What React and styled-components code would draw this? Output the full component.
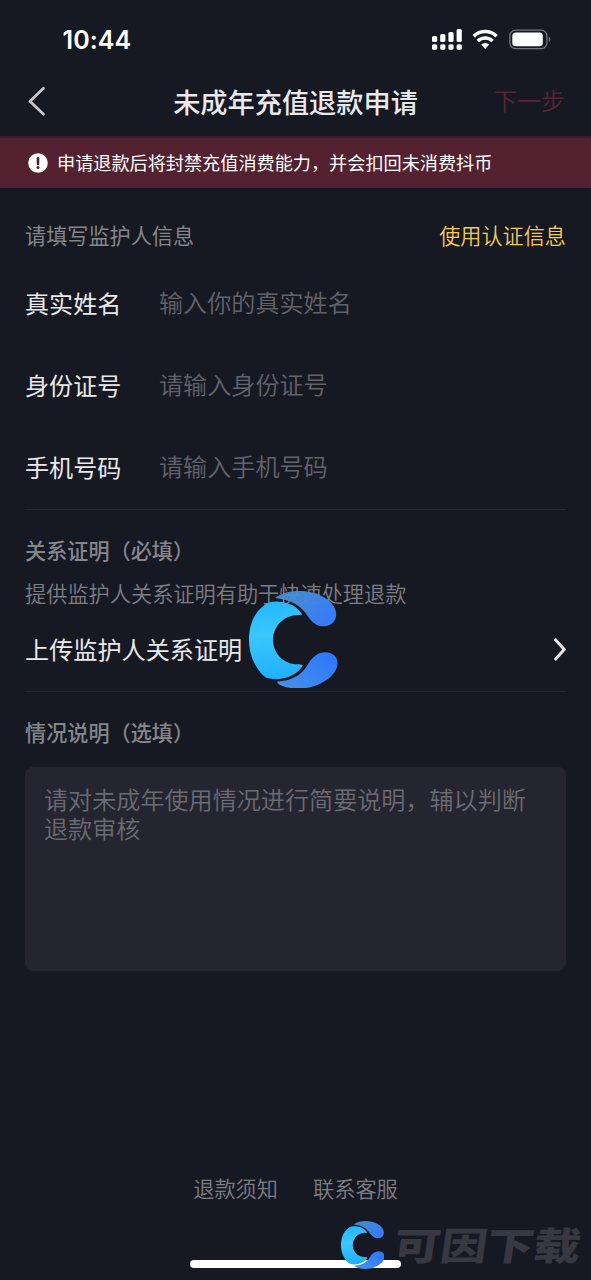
import React from "react";
import styled, { createGlobalStyle } from "styled-components";

const Global = createGlobalStyle`
  * { box-sizing: border-box; }
  body { margin: 0; background: #171922; }
`;

const Screen = styled.main`
  position: relative;
  display: flex;
  flex-direction: column;
  width: 591px;
  height: 1280px;
  overflow: hidden;
  background: #171922;
  color: #e9e9ec;
  font-family: "Noto Sans CJK SC", sans-serif;
  font-weight: 400;
  white-space: nowrap;
`;

const StatusBar = styled.div`
  display: flex;
  align-items: center;
  justify-content: space-between;
  height: 68px;
  padding: 12px 40px 0 62.5px;
`;

const Clock = styled.time`
  font: 600 25px/30px Inter, sans-serif;
  letter-spacing: 0.1px;
  color: #fff;
`;

const StatusIcons = styled.svg`
  display: block;
  width: 120px;
  height: 24px;
`;

const Header = styled.header`
  display: grid;
  grid-template-columns: 100px 1fr 100px;
  align-items: center;
  height: 68px;
  padding: 0 26px 2px;
`;

const Title = styled.h1`
  margin: 0;
  text-align: center;
  font-size: 27.2px;
  line-height: 40px;
  font-weight: 500;
  color: #e9e9f0;
`;

const BackButton = styled.button`
  display: flex;
  padding: 0;
  border: 0;
  background: none;
`;

const NextButton = styled.button`
  padding: 0 0 2px;
  border: 0;
  background: none;
  text-align: right;
  font: 350 24px/36px "Noto Sans CJK SC", sans-serif;
  color: #5a2338;
`;

const Notice = styled.div`
  display: flex;
  align-items: center;
  gap: 9px;
  height: 52px;
  padding-left: 28px;
  border-top: 2px solid #37202c;
  background: #532130;
  font-size: 18.15px;
  font-weight: 400;
  line-height: 26px;
  color: #fff;
`;

const NoticeText = styled.span`
  padding-bottom: 3px;
`;

const Content = styled.div`
  display: flex;
  flex-direction: column;
  flex: 1;
  padding: 0 25px;
`;

const SectionHead = styled.div`
  display: flex;
  align-items: center;
  justify-content: space-between;
  height: 32px;
  margin-top: ${(p) => p.$top}px;
  font-size: 21.15px;
  line-height: 32px;
  font-weight: ${(p) => p.$weight || 400};
  color: #85868c;
`;

const AuthLink = styled.a`
  font-weight: 350;
  color: #f3cd58;
`;

const Field = styled.label`
  display: flex;
  align-items: center;
  height: 82px;
  font-size: 24.1px;
  line-height: 36px;
`;

const FieldLabel = styled.span`
  width: 134px;
`;

const Placeholder = styled.span`
  padding-bottom: 2px;
  font-weight: 350;
  color: #62636a;
`;

const Fields = styled.div`
  height: 247px;
  margin-top: 11px;
`;

const Divider = styled.hr`
  width: 100%;
  height: 1px;
  margin: 0;
  border: 0;
  background: #25252e;
`;

const Hint = styled.p`
  margin: 11px 0 0;
  font-size: 21.2px;
  line-height: 32px;
  font-weight: 350;
  color: #7d7e84;
`;

const UploadRow = styled.div`
  display: flex;
  align-items: center;
  justify-content: space-between;
  height: 82px;
  padding-bottom: 2px;
  font-size: 24.15px;
  line-height: 36px;
`;

const Description = styled.div`
  height: 204px;
  margin-top: 19px;
  padding: 17px 19px;
  border-radius: 8px;
  background: #25252f;
  font-size: 24.1px;
  line-height: 29px;
  font-weight: 350;
  color: #6b6b73;
`;

const Footer = styled.footer`
  display: flex;
  justify-content: center;
  gap: 35px;
  height: 32px;
  margin-bottom: 56px;
  font-size: 21.2px;
  line-height: 32px;
  font-weight: 350;
  color: #7d7e84;
`;

const HomeIndicator = styled.div`
  align-self: center;
  flex: none;
  width: 211px;
  height: 8px;
  margin: 0 0 12px 0;
  border-radius: 4px;
  background: #fff;
`;

const CenterMark = styled.div`
  position: absolute;
  left: 249px;
  top: 590.6px;
  width: 88.5px;
  height: 97.6px;
`;

const CornerMark = styled.div`
  position: absolute;
  left: 340.5px;
  top: 1220.5px;
  display: flex;
  gap: 10px;
  height: 48px;
`;

const MarkText = styled.span`
  font-size: 38px;
  line-height: 45px;
  font-weight: 900;
  color: #373841;
  transform: skewX(-8deg) scaleX(1.23);
  transform-origin: left center;
`;

const LogoSvg = styled.svg`
  display: block;
  width: ${(p) => p.$w}px;
  height: ${(p) => p.$h}px;
`;

function Logo({ id, w, h }) {
  return (
    <LogoSvg $w={w} $h={h} viewBox="57 62 265 293" preserveAspectRatio="none">
      <defs>
        <linearGradient id={id + "a"} x1="0" y1="0" x2="0.1" y2="1">
          <stop offset="0" stopColor="#22b4fd" />
          <stop offset="0.45" stopColor="#3ac8fd" />
          <stop offset="1" stopColor="#22b0fd" />
        </linearGradient>
        <linearGradient id={id + "b"} x1="0" y1="0" x2="1" y2="0.5">
          <stop offset="0" stopColor="#4a98da" stopOpacity="0.88" />
          <stop offset="0.5" stopColor="#428adf" stopOpacity="0.97" />
          <stop offset="1" stopColor="#367cf8" />
        </linearGradient>
        <linearGradient id={id + "c"} x1="0" y1="1" x2="1" y2="0.3">
          <stop offset="0" stopColor="#4892e2" />
          <stop offset="1" stopColor="#2f78ff" />
        </linearGradient>
      </defs>
      <path fill={`url(#${id}a)`} d="M216 132C202 109 176 95 145 94C125 93 111 97 101 106C72 127 57 165 57 208C57 252 74 291 103 319C110 325 124 327 140 327C173 326 204 311 218 286C216 282 209 282 202 282C160 281 129 249 129 208C129 168 162 134 204 134C210 134 214 134 216 132Z" />
      <path fill={`url(#${id}b)`} d="M137 81C155 68 180 62 207 62C267 62 318 94 318 132C318 153 303 168 281 168C259 168 246 155 234 139C215 109 187 89 137 84Z" />
      <path fill={`url(#${id}c)`} d="M142 334C184 332 213 315 230 288C246 260 263 246 286 246C307 246 322 260 322 278C322 316 267 355 204 355C177 355 152 348 142 338Z" />
    </LogoSvg>
  );
}

const fields = [
  ["真实姓名", "输入你的真实姓名"],
  ["身份证号", "请输入身份证号"],
  ["手机号码", "请输入手机号码"],
];

const bars = [
  [0, 7, 6],
  [8.2, 5, 8],
  [16.4, 3, 10],
  [24.6, 0, 13],
];

export default function App() {
  return (
    <Screen>
      <Global />
      <StatusBar>
        <Clock>10:44</Clock>
        <StatusIcons viewBox="0 0 120 24" fill="#fff">
          {bars.map(([x, y, h]) => (
            <g key={x}>
              <rect x={x + 1} y={y + 1} width="5.2" height={h} rx="1.6" />
              <rect x={x + 1} y="16.2" width="5.2" height="5.6" rx="1.6" />
            </g>
          ))}
          <g fill="none" stroke="#fff" strokeWidth="3.6">
            <path d="M42.8 8.2a16.2 16.2 0 0 1 22.8 0" />
            <path d="M46.8 13a10.6 10.6 0 0 1 14.8 0" />
          </g>
          <path d="M50.2 16.6a6 6 0 0 1 8 0L54.2 21Z" />
          <rect x="78.9" y="2.2" width="37" height="18.4" rx="5.6" fill="none" stroke="#77787e" strokeWidth="1.3" />
          <rect x="81.3" y="4.6" width="30.5" height="13.6" rx="3.5" />
          <path d="M117.8 8.6v5.6c2-.9 2-4.7 0-5.6Z" fill="#77787e" />
        </StatusIcons>
      </StatusBar>
      <Header>
        <BackButton aria-label="返回">
          <svg width="24" height="32" viewBox="0 0 24 32" fill="none" stroke="#c6c6cc" strokeWidth="2.7" strokeLinecap="round" strokeLinejoin="round">
            <path d="M17.5 3.2 4 16.2l13.5 13" />
          </svg>
        </BackButton>
        <Title>未成年充值退款申请</Title>
        <NextButton>下一步</NextButton>
      </Header>
      <Notice>
        <svg width="20" height="20" viewBox="0 0 20 20">
          <circle cx="10" cy="10" r="9.8" fill="#fff" />
          <path d="M10 5.3v5.6" stroke="#532130" strokeWidth="2.6" strokeLinecap="round" />
          <circle cx="10" cy="14.6" r="1.5" fill="#532130" />
        </svg>
        <NoticeText>申请退款后将封禁充值消费能力，并会扣回未消费抖币</NoticeText>
      </Notice>
      <Content>
        <SectionHead $top={31}>
          <span>请填写监护人信息</span>
          <AuthLink>使用认证信息</AuthLink>
        </SectionHead>
        <Fields>
          {fields.map(([label, hint]) => (
            <Field key={label}>
              <FieldLabel>{label}</FieldLabel>
              <Placeholder>{hint}</Placeholder>
            </Field>
          ))}
        </Fields>
        <Divider />
        <SectionHead $top={24} $weight={500}>关系证明（必填）</SectionHead>
        <Hint>提供监护人关系证明有助于快速处理退款</Hint>
        <UploadRow>
          <span>上传监护人关系证明</span>
          <svg width="13" height="25" viewBox="0 0 13 25" fill="none" stroke="#e6e6ea" strokeWidth="2.9">
            <path d="M1.8 2 11.2 12.5 1.8 23" />
          </svg>
        </UploadRow>
        <Divider />
        <SectionHead $top={24} $weight={500}>情况说明（选填）</SectionHead>
        <Description>
          请对未成年使用情况进行简要说明，辅以判断
          <br />
          退款审核
        </Description>
      </Content>
      <Footer>
        <span>退款须知</span>
        <span>联系客服</span>
      </Footer>
      <HomeIndicator />
      <CenterMark>
        <Logo id="center" w={88.5} h={97.6} />
      </CenterMark>
      <CornerMark>
        <Logo id="corner" w={43.5} h={48} />
        <MarkText>可因下载</MarkText>
      </CornerMark>
    </Screen>
  );
}
